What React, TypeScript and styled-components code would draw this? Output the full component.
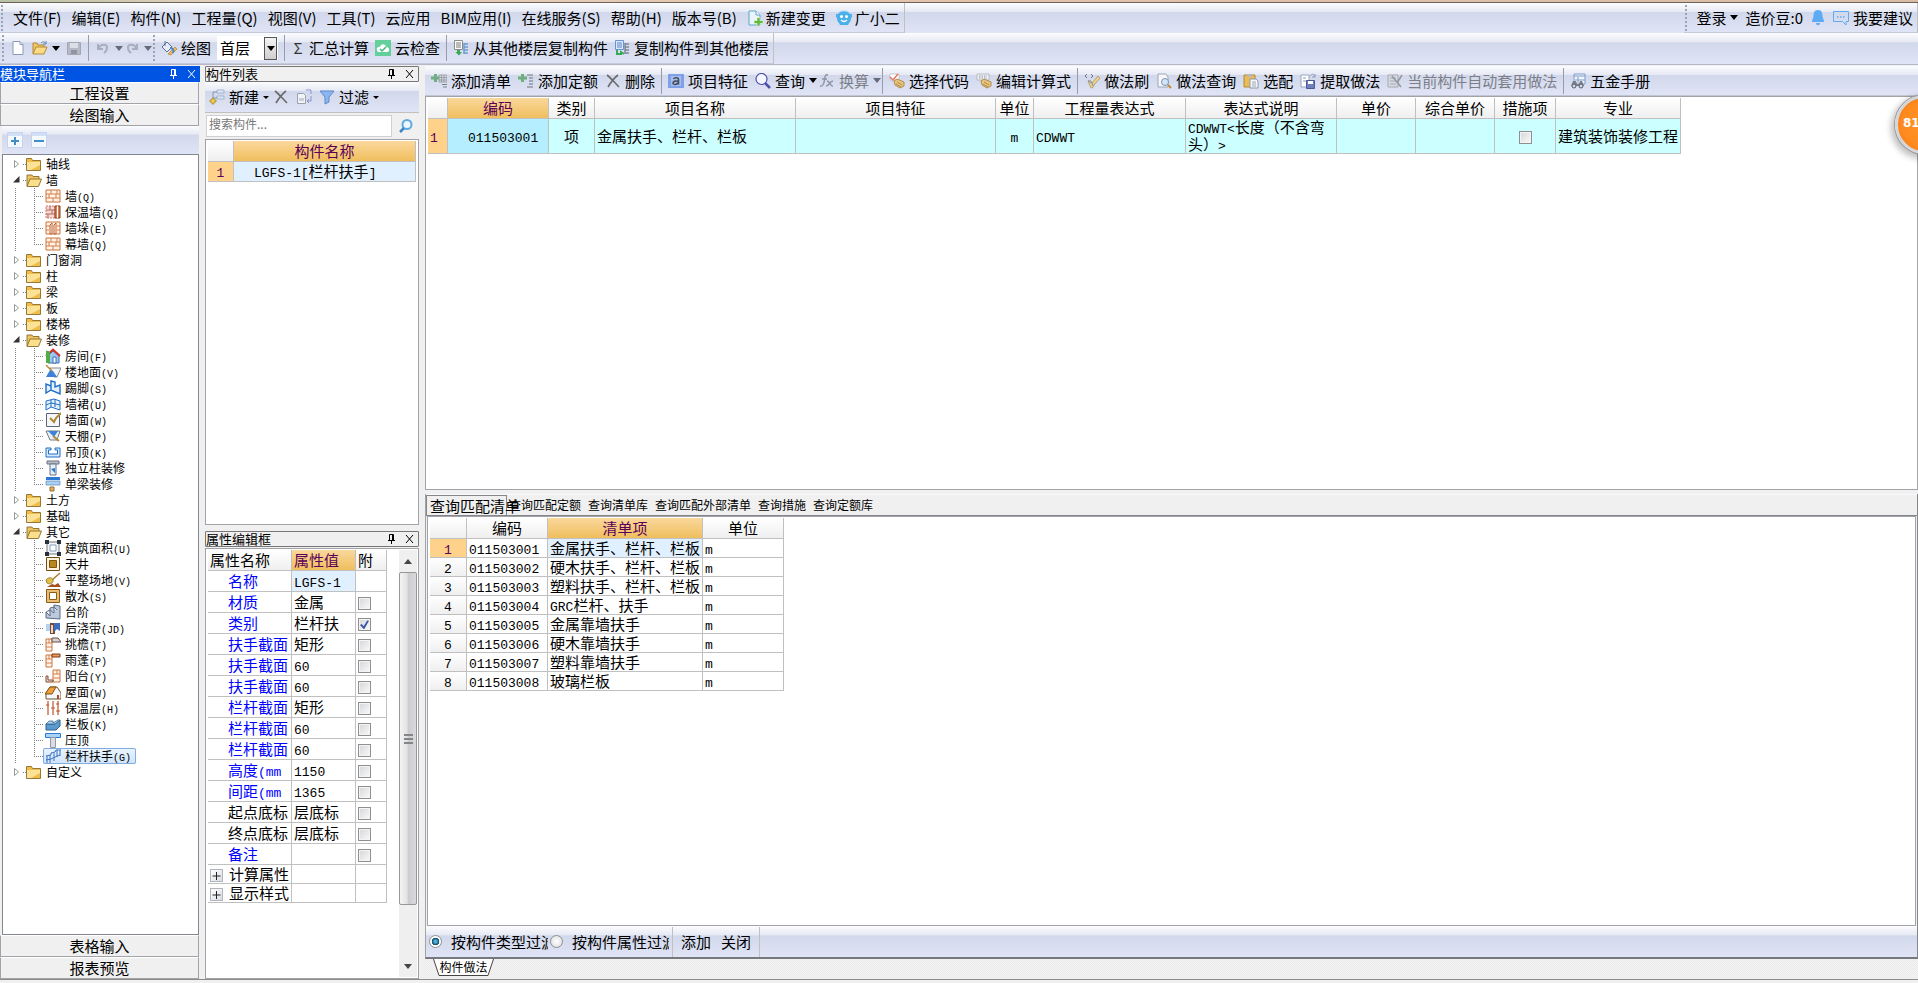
import React from 'react';
import styled, { createGlobalStyle, css } from 'styled-components';

const GlobalStyle = createGlobalStyle`
  *, *::before, *::after { box-sizing: border-box; }
  body { margin: 0; }
  button, input, select { font: inherit; color: inherit; margin: 0; }
  button { background: none; border: 0; padding: 0; white-space: nowrap; }
  ul { list-style: none; margin: 0; padding: 0; }
`;

const LINE = '#c0c0c0';
const EDGE = '#a2a3a8';
const barFill = 'linear-gradient(#fbfcfe 0, #e6e9f4 30%, #d2d8eb 31%, #dfe5f6 100%)';
const headFill = 'linear-gradient(#ffffff, #efefef)';
const activeHeadFill = 'linear-gradient(#fad89c, #f0be5e)';

/* ---------- icons ---------- */

const shapes: Record<string, React.ReactNode> = {
  newFile: <><path d="M3 1.500h7l3 3v10H3z" fill="#fff" stroke="#8a9bb8" /><path d="M10 1.500v3h3" fill="#dce6f4" stroke="#8a9bb8" /></>,
  open: <><path d="M1 14V3h4l1 2h6v3" fill="#f0c560" stroke="#b58a3a" /><path d="M1 14 4 7h11l-3 7z" fill="#fbdc84" stroke="#b58a3a" /><path d="M9 3c2-2 4-1 5 1m0-3v3h-3" fill="none" stroke="#5f86b8" /></>,
  save: <><path d="M1.500 2.500h13v12h-13z" fill="#b4b9c6" stroke="#a3a7b4" /><path d="M4 3h8v5H4z" fill="#dcdfe7" /><path d="M5 10h6v4H5z" fill="#8f95a4" /></>,
  undo: <path d="M3 4v5h5M3.500 8.500C6 3 13 4 12 8c0 3-2 4-3 5" fill="none" stroke="#a9aebd" strokeWidth="2" />,
  redo: <path d="M13 4v5H8M12.500 8.500C10 3 3 4 4 8c0 3 2 4 3 5" fill="none" stroke="#a9aebd" strokeWidth="2" />,
  draw: <><path d="M1 7 6 2l5 5-5 5z" fill="#e6edf8" stroke="#5c7193" /><path d="M4 1v5" stroke="#5c7193" /><path d="m7 14 7-7 2 2-6 6z" fill="#e9b95c" stroke="#a77a2a" strokeWidth=".6" /><path d="M9 8c3 0 4 2 3 5" fill="none" stroke="#4c83cc" strokeWidth="2" /></>,
  cloudCheck: <><rect width="16" height="16" fill="#63cf9a" /><path d="M3 12c-3-3 0-6 2-5 1-4 6-3 6 0 4 0 4 5 1 5z" fill="#fff" /><path d="m5 9 2 2 4-4" fill="none" stroke="#46b57c" strokeWidth="1.500" /></>,
  copyFrom: <><path d="M1.500.5h8v9h-8z" fill="#fff" stroke="#8b8b8b" /><path d="M3 3h5M3 5h5M3 7h5" stroke="#777" /><path d="M4 10h3v2h2l-3 3.500L2.500 12H4z" fill="#39a957" /><path d="M11 3v11M11 4h4M11 7h4M11 10h4M11 13h4" stroke="#6b9bd2" strokeWidth="1.500" fill="none" /></>,
  copyTo: <><path d="M1.500.5h8v9h-8z" fill="#dce8fa" stroke="#6b93cf" /><path d="M3 3h5M3 5h5M3 7h5" stroke="#5985c9" /><path d="M3 10v4h4v-2l3 2" stroke="#39a957" strokeWidth="2" fill="none" /><path d="M11 3v11M11 4h4M11 7h4M11 10h4M11 13h4" stroke="#7d8a9a" strokeWidth="1.500" fill="none" /></>,
  newChange: <><path d="M2 1h7l4 4v10H2z" fill="#eaf4fb" stroke="#5fa5c9" /><path d="M9 1v4h4" fill="#fff" stroke="#5fa5c9" /><path d="M10 7.500h3v3h3v3h-3V16h-3v-2.500H7v-3h3z" fill="#62bb3c" stroke="#fff" strokeWidth=".5" /></>,
  robot: <><path d="M2 4c2-4 10-4 12 0h2v3l-1 1c0 3-1 4-2 5l-1 2H4l-1-2C2 12 1 11 1 8L0 7V4z" fill="#4bb0ea" /><circle cx="5.500" cy="6.500" r="1.500" fill="#fff" /><circle cx="10.500" cy="6.500" r="1.500" fill="#fff" /><path d="M5 10c2 2 4 2 6 0" stroke="#fff" fill="none" strokeWidth="1.200" /><path d="M3 2.500c3-2 7-2 10 0" stroke="#9ad6f7" fill="none" /></>,
  bell: <><path d="M8 0c4 0 4.500 3 4.500 6.500L14 11v1H2v-1l1.500-4.500C3.500 3 4 0 8 0z" fill="#5dabf4" /><path d="M6 13h4c0 3-4 3-4 0z" fill="#5dabf4" /></>,
  chat: <><path d="M.5 1.500h15v10H13V15l-3.500-3.500h-9z" fill="none" stroke="#5dabf4" /><path d="M4 7h1.500M7 7h1.500M10 7h1.500" stroke="#5dabf4" strokeWidth="1.500" /></>,
  addList: <><path d="M3 1h3v2.500h3v3H6V9H3V6.500H0v-3h3z" fill="#6fae7e" /><path d="M8 2h8v7H8z" fill="#d8dbe2" stroke="#8f949e" strokeWidth=".8" /><path d="M8 4.500h8M8 7h8M10.500 2v7M13 2v7" stroke="#8f949e" strokeWidth=".8" /><path d="M11 11.500h5M12 14h4" stroke="#7a808b" /></>,
  addQuota: <><path d="M3 1h3v2.500h3v3H6V9H3V6.500H0v-3h3z" fill="#6fae7e" /><path d="M9 2h6M11 5h4M11 8h4M11 11h4M9 14h6" stroke="#6c727c" /></>,
  cross: <path d="M2 2c4 3 8 8 12 12M13 2C9 5 6 9 3 14" fill="none" stroke="#6b6b6b" strokeWidth="1.600" />,
  feature: <><rect y="1" width="16" height="14" fill="#7ea0e6" /><rect x="3" y="3" width="10" height="10" fill="#a7bdf0" /><path d="M5.500 6c1-2 5-1.500 5 .5v5m0-3c-2-1-5.500-.5-5.500 1.500s4 2 5.500-.5" fill="none" stroke="#4a4f5e" strokeWidth="1.600" /></>,
  magnifier: <><circle cx="6.500" cy="6" r="5.500" fill="#f3f6ff" stroke="#4d4fae" strokeWidth="1.200" /><path d="m10 10 5 5" stroke="#4d4fae" strokeWidth="2.500" /></>,
  fx: <path d="M9 2C6 1 6 4 5.500 7S4 14 1 13m2-7h5m0 2c3 0 3 6 6 5m0-5c-3 0-4 5-7 5" fill="none" stroke="#8e93a0" strokeWidth="1.400" />,
  pickCode: <><path d="M1 1h9v6H1z" fill="#fff" stroke="#b9b9b9" strokeWidth=".7" /><path d="m1 4 3 3 5-6" fill="none" stroke="#e2755e" strokeWidth="1.500" /><path d="m5 8 3-2 7 3v4l-4 2-5-3z" fill="#e7c57e" stroke="#a57c3a" strokeWidth=".8" /><path d="m8 9 5 3M7 11l5 3" stroke="#a57c3a" strokeWidth=".8" /></>,
  editExpr: <><path d="M1 1h12v6H1z" fill="#eef0f5" stroke="#a4a9b3" strokeWidth=".7" /><path d="M3 3h8M3 5h8" stroke="#8f949e" strokeDasharray="1.500 1" /><path d="m5 8 3-2 7 3v4l-4 2-5-3z" fill="#e7c57e" stroke="#a57c3a" strokeWidth=".8" /><path d="m8 9 5 3M7 11l5 3" stroke="#a57c3a" strokeWidth=".8" /></>,
  brush: <><path d="M3 1 1 3l2 2M7 1l2 2-2 2" fill="none" stroke="#6f7480" /><path d="m4 8 2-1 2 3 6-7 2 2-6 7c0 2-2 3-3 3z" fill="#edd28e" stroke="#a58a4a" strokeWidth=".7" /><path d="m4 8 4 2 1 3" stroke="#6f93c8" fill="none" /></>,
  docSearch: <><path d="M2 1h8l2 3v10H2z" fill="#f6f8fb" stroke="#9aa6b8" /><circle cx="9" cy="9" r="3.500" fill="#cfe6f8" stroke="#7d94b0" /><path d="m12 12 3 3" stroke="#c58a3c" strokeWidth="2" /></>,
  clipboard: <><path d="M1 2h11v12H1z" fill="#eabb59" stroke="#b08a39" /><path d="M4 1h5v3H4z" fill="#b9b9b9" /><path d="M7 6h6l2 2v7H7z" fill="#f5f7fb" stroke="#8d98ab" /><path d="M9 9h4M9 11h4M9 13h4" stroke="#9aa6b8" /></>,
  extract: <><path d="M1 2h8v12H1z" fill="#fff" stroke="#9aa6b8" /><path d="M3 5h3M3 8h3" stroke="#8a9bb8" /><path d="M6.500 7.500h8v8h-8z" fill="#6f7fbc" stroke="#4c5b96" /><path d="M8 8h5v3H8z" fill="#fff" /><path d="M10 3c2-3 4-2 5 1m0-3v3h-3" fill="none" stroke="#8a9bb8" /></>,
  autoApply: <><path d="M1 2h10v12H1z" fill="#d7dae1" stroke="#a3a7b1" /><path d="M3 5h6M3 8h6M3 11h6" stroke="#a3a7b1" /><path d="M5 3 14 14M10 10l5-8" stroke="#9297a3" strokeWidth="1.500" /></>,
  handbook: <><path d="M4 1h11v10H4z" fill="#eef4fc" stroke="#7f9cc8" /><path d="M4 3h11M8 4v6M5 7h10" stroke="#7f9cc8" /><path d="M3 8h3l1 3h2l1-3h2l2 5H1z" fill="#7a818d" /><circle cx="4" cy="13" r="2" fill="#d5dae4" stroke="#565d69" /><circle cx="11" cy="13" r="2" fill="#d5dae4" stroke="#565d69" /></>,
  newItem: <><path d="M4 13V3h4m-4 6h4" fill="none" stroke="#7e94b5" /><path d="M8 1h7v3H8zM8 7h7v3H8z" fill="#dfe7f3" stroke="#8aa0c0" strokeWidth=".7" /><path d="M3 9h2v2h2v2H5v2H3v-2H1v-2h2z" fill="#f5d451" stroke="#a98a20" strokeWidth=".8" /></>,
  copyItem: <><path d="M1.500 4.500h6l2 2v8h-8z" fill="#f2f3f6" stroke="#9aa0ad" /><path d="M3 9h5v3H3z" fill="#c9cdd6" /><path d="M10 1h5v4M15 7v5h-4m2-2-2 2 2 2" fill="none" stroke="#8795cf" /></>,
  funnel: <path d="M1 2h14L10 8v5l-4 2V8z" fill="#8cb6ef" stroke="#5d87cc" />,
  searchBlue: <><circle cx="9" cy="6.500" r="4.500" fill="#eef7ff" stroke="#5eaae0" strokeWidth="2" /><path d="m6 10-4 4" stroke="#3a86c8" strokeWidth="2.500" /></>,
  expand: <><path d="M.5.5h15v15H.5z" fill="#f5f8fd" stroke="#c4d3ee" /><path d="M1 1h14v3H1z" fill="#d3dff5" /><path d="M8 5v8M4 9h8" stroke="#3f8fc6" strokeWidth="2" /></>,
  collapse: <><path d="M.5.5h15v15H.5z" fill="#f5f8fd" stroke="#c4d3ee" /><path d="M1 1h14v3H1z" fill="#d3dff5" /><path d="M3 9h10" stroke="#3f8fc6" strokeWidth="2" /></>,
  folder: <><path d="M.5 14.500v-12h5l1 2h8v10z" fill="#f0bd49" stroke="#8a6d2b" strokeWidth=".9" /><path d="M1 6h13v3l-9 5H1z" fill="#fbe297" /></>,
  folderOpen: <><path d="M1 14V3h5l1 1.500h6V8" fill="#edc35d" stroke="#8a6d2b" strokeWidth=".9" /><path d="M1 14.500 4 7h11.500l-3 7.500z" fill="#fbdf8b" stroke="#8a6d2b" strokeWidth=".9" /></>,
  brick: <><path d="M1 2h14v12H1z" fill="#fff3e8" stroke="#c9743d" /><path d="M1 6h14M1 10h14M6 2v4M11 6v4M4 6v4M8 10v4M12 2v4" stroke="#d67f48" fill="none" /></>,
  brickIns: <><path d="M1 2h9v12H1z" fill="#f7d9d3" stroke="#c97b6d" strokeDasharray="2 1" /><path d="M1 6h9M1 10h9M5 2v4M7 6v4M3 10v4" stroke="#b86b62" /><path d="M10 2h5v12h-5z" fill="#d98555" stroke="#8c3d20" /><path d="M12.500 2v12" stroke="#fff" /></>,
  brickPier: <><path d="M1 2h14v12H1z" fill="#fff3e8" stroke="#c9743d" /><path d="M1 6h4M1 10h3M12 6h3M12 10h3" stroke="#d67f48" /><path d="M5 14V5l2-2v11zM9 14V5l2-2v11z" fill="#fff" stroke="#c05a24" /></>,
  room: <><path d="M3 8v7h11V8L8 3z" fill="#9cc6f0" stroke="#3a6fb0" /><path d="M1 8 8 1.500 15 8" fill="none" stroke="#d93025" strokeWidth="2" /><path d="M1 3c3-1 4 1 4 3v9H1z" fill="#4fae4a" /><path d="M8 9h3v6H8z" fill="#fff" stroke="#3a6fb0" /></>,
  floorFinish: <><path d="M5 4h11l-4 9H9z" fill="#f2f6fb" stroke="#888" /><path d="M5 6 1 13h11L8 7z" fill="#3d82d6" /><path d="m1 1 6 6" stroke="#b58a3a" strokeWidth="1.500" /></>,
  skirting: <path d="M1 4v9l5-3 9 4V5L10 7V2L6 1v5zM6 6v4" fill="#e3f0fd" stroke="#1f6fc4" strokeWidth="1.400" />,
  dado: <path d="M1 5v9l5-3 9 3V5L9 3 5 4zM1 9l5-2 9 2M6 4v7M10 3v8" fill="#e3f0fd" stroke="#1f6fc4" />,
  wallFinish: <><path d="M1.500 1.500h13v13h-13z" fill="#f4f6fb" stroke="#5c6577" /><path d="m5 6 4 4 2-4 5-5" fill="none" stroke="#b08a2f" strokeWidth="2" /></>,
  ceiling: <><path d="M1 3h14l-3 9H5z" fill="#e3f0fd" stroke="#777" /><path d="M3 3h10l-4 6z" fill="#3d82d6" /><path d="m8 8 6 5" stroke="#b58a3a" strokeWidth="2" /></>,
  dropCeiling: <path d="M1 4h5v2H3.500v4h9V6H10V4h5v9H1z" fill="#d4e9fb" stroke="#1f6fc4" />,
  columnFinish: <><path d="M2 1h12v3H2z" fill="#b8bec9" stroke="#6d7480" /><path d="M5 4h6v11H5z" fill="#e3f0fd" stroke="#6d7480" /><path d="m6 9 4 4V8z" fill="#2c7ad6" /></>,
  beamFinish: <><path d="M1 1h14v3H1z" fill="#2c7ad6" /><path d="M1 5h14v4H1z" fill="#a9d0f2" stroke="#5688ba" strokeWidth=".7" /><path d="M5 11h4v4H5z" fill="#e5b06c" stroke="#9b6c2c" /></>,
  area: <><path d="M2 2h12v12H2z" fill="#f0f4fb" stroke="#777" /><path d="M5 5h6v6H5z" fill="#fff" stroke="#8aa0c0" /><path d="M0 0h4v4H0zM12 0h4v4h-4zM0 12h4v4H0zM12 12h4v4h-4z" fill="#2a2f3d" /></>,
  well: <><path d="M1.500 1.500h13v13h-13z" fill="#fdf3dc" stroke="#6e4c14" /><path d="M4.500 4.500h7v7h-7z" fill="#b9851f" stroke="#7d5510" /></>,
  site: <><path d="m15 1-8 7" stroke="#a27e2e" strokeWidth="1.500" /><path d="M1 8c2-3 6-3 7 0s-3 5-6 3z" fill="#e2c04a" stroke="#8c7220" strokeWidth=".8" /><path d="m2 15 5-3 3 1 3-2 3 4z" fill="#a4511d" /></>,
  apron: <><path d="M1.500 1.500h13v13h-13z" fill="#e9bd72" stroke="#8a5b1a" /><path d="M4.500 4.500h7v7h-7z" fill="#fff" stroke="#8a5b1a" /></>,
  steps: <><path d="M1 14V8l4-2V4l4-1V1l6 1v13z" fill="#bcc9dd" stroke="#5d6b83" /><path d="m1 8 4 4V6l4 3V3l3 3" fill="#eef3fa" stroke="#5d6b83" /></>,
  strip: <><path d="M1 4h5v7H1z" fill="#b4d2f0" /><path d="M5 3h5v11H5z" fill="#7a4a33" /><path d="M9 3h6v8l-3-2-3 3z" fill="#3d6fc0" /><path d="M6 5h2v8H6z" fill="#e9d6cc" /></>,
  eave: <><path d="M1 3h6v12H1z" fill="#fff3e8" stroke="#c9743d" /><path d="M1 7h6M1 11h6M4 3v4" stroke="#d67f48" /><path d="M7 2h6l3 4H7z" fill="#cfd4dc" stroke="#6e4c3c" /></>,
  canopy: <><path d="M1 3h6v12H1z" fill="#fff3e8" stroke="#c9743d" /><path d="M1 7h6M1 11h6M4 3v4" stroke="#d67f48" /><path d="M7 2h8v3H7z" fill="#e39a5c" stroke="#7e3d18" /></>,
  balcony: <><path d="M8 2h7v12H8z" fill="#fff3e8" stroke="#c9743d" /><path d="M8 6h7M8 10h7M12 2v4" stroke="#d67f48" /><path d="M1 8h2v4h5v2H1z" fill="#d9dce3" stroke="#8c4f2c" /></>,
  roof: <><path d="M1 9 5 3h7l4 6v6H1z" fill="#f5f7fb" stroke="#6b5531" /><path d="M0 10 5 3h6L7 10z" fill="#eea03b" stroke="#805213" /><path d="M12 11h2v4h-2z" fill="#b24a1f" /></>,
  insulation: <path d="M3 1v14M8 1v14M13 1v14M1 5h3M6 8h4M11 11h4M11 4h3" stroke="#c0532a" strokeWidth="1.200" />,
  railPlate: <><path d="M1 8h9l5-4v6l-4 4H1z" fill="#5b9bd0" stroke="#2f608c" /><path d="m1 8 3-3h4v2l5-3h2l-5 4z" fill="#a9d0ee" stroke="#2f608c" strokeWidth=".7" /></>,
  coping: <><path d="M.5 1.500h15v4H.5z" fill="#a9d3f5" stroke="#2c7ad6" /><path d="M5.500 5.500h5v10h-5z" fill="#d9dce3" stroke="#9298a5" /></>,
  handrail: <path d="M1 8l5-1V5l4-1 1-2h5M2 8v7M5 7v8M9 5v8M12 2v7M15 2v6M1 12l5-1 4-2 5-2" fill="none" stroke="#3a72c4" />,
};

const Glyph = styled.svg`
  width: 16px;
  height: 16px;
  flex: none;
  display: block;
`;

const Icon = ({ name }: { name: string }) => (
  <Glyph viewBox="0 0 16 16" aria-hidden="true">{shapes[name]}</Glyph>
);

const CaretGlyph = styled.svg<{ $pull?: boolean }>`
  width: 8px;
  height: 5px;
  flex: none;
  margin-right: ${p => (p.$pull ? '-5px' : '0')};
`;

const Caret = ({ pull, color = '#000' }: { pull?: boolean; color?: string }) => (
  <CaretGlyph $pull={pull} viewBox="0 0 8 5" aria-hidden="true"><path d="M0 0h8L4 5z" fill={color} /></CaretGlyph>
);

const SmallCaret = () => (
  <CaretGlyph $pull viewBox="0 0 8 5" aria-hidden="true"><path d="M0 1h6L3 4z" fill="#000" /></CaretGlyph>
);

/* ---------- text in the grid face ---------- */

const Latin = styled.span<{ $small?: boolean }>`
  font-family: "Liberation Mono", "Noto Sans CJK SC", monospace;
  font-size: ${p => (p.$small ? '10px' : '13px')};
  line-height: 1;
`;

const GridText = ({ text, small }: { text: string; small?: boolean }) => (
  <>
    {text.split(/([\x20-\x7e]+)/).filter(Boolean).map((part, i) =>
      /^[\x20-\x7e]/.test(part) ? <Latin key={i} $small={small}>{part}</Latin> : part)}
  </>
);

/* ---------- window frame ---------- */

const Window = styled.div`
  height: 100vh;
  min-height: 900px;
  display: flex;
  flex-direction: column;
  position: relative;
  overflow: hidden;
  background: #f0f0f0;
  color: #000;
  font: 15px/18px "Noto Sans CJK SC", sans-serif;
`;

const TitleEdge = styled.div`
  height: 3px;
  flex: none;
  background: linear-gradient(90deg, #b9c2a4, #e6d2c0 12%, #e2c3aa 50%, #d9bda6);
  border-bottom: 1px solid #6d625c;
`;

const Strip = styled.div<{ $height: number }>`
  height: ${p => p.$height}px;
  flex: none;
  display: flex;
  justify-content: space-between;
  background: ${barFill};
`;

const BarPart = styled.div<{ $gap?: number; $start?: number }>`
  display: flex;
  align-items: center;
  gap: ${p => p.$gap ?? 10}px;
  padding: 0 4px 0 ${p => p.$start ?? 0}px;
  border-right: 1px solid ${LINE};
  border-bottom: 1px solid #c5cad8;
`;

const Grip = styled.span<{ $space?: number }>`
  width: 2px;
  height: 26px;
  flex: none;
  margin-right: ${p => p.$space ?? 0}px;
  background: repeating-linear-gradient(#9aa2b8 0 2px, transparent 2px 4px);
`;

const BarButton = styled.button<{ $muted?: boolean; $tight?: boolean }>`
  display: flex;
  align-items: center;
  gap: ${p => (p.$tight ? 3 : 4)}px;
  height: 24px;
  color: ${p => (p.$muted ? '#7d7f88' : '#000')};
`;

const Divider = styled.span<{ $snug?: boolean }>`
  width: 1px;
  height: 26px;
  flex: none;
  margin: 0 ${p => (p.$snug ? '-1px' : '0')};
  background: #999ca8;
`;

const FloorBox = styled.span`
  display: flex;
  align-items: center;
  width: 61px;
  height: 24px;
  padding-right: 1px;
  background: #fff;
`;

const FloorSelect = styled.select`
  appearance: none;
  flex: 1;
  min-width: 0;
  border: 0;
  background: transparent;
  padding: 0 0 0 3px;
`;

const FloorArrow = styled.span`
  display: grid;
  place-items: center;
  width: 13px;
  height: 23px;
  border: 1px solid #55555a;
  background: linear-gradient(#f4f4f4, #cfcfcf);
`;

const Sigma = styled.span`
  width: 14px;
  font-size: 15px;
  color: #333;
`;

/* ---------- docks ---------- */

const Body = styled.div`
  flex: 1;
  min-height: 0;
  display: flex;
  padding: 1px 0 0;
  border-top: 1px solid #b4b8c8;
`;

const NavDock = styled.aside`
  width: 200px;
  flex: none;
  display: flex;
  flex-direction: column;
`;

const MidDock = styled.aside`
  width: 214px;
  flex: none;
  margin-left: 5px;
  display: flex;
  flex-direction: column;
`;

const DockTitle = styled.header<{ $active?: boolean }>`
  height: 16px;
  flex: none;
  display: flex;
  align-items: center;
  font-size: 13px;
  line-height: 14px;
  ${p => p.$active
    ? css`background: #0054e3; color: #fff;`
    : css`border: 1px solid #777; border-radius: 1px;`}
`;

const DockName = styled.span`
  flex: 1;
`;

const DockButton = styled.button`
  width: 18px;
  display: grid;
  place-items: center;
`;

const DockSvg = styled.svg`
  width: 9px;
  height: 10px;
`;

const DockHeader = ({ title, active }: { title: string; active?: boolean }) => (
  <DockTitle $active={active}>
    <DockName>{title}</DockName>
    <DockButton aria-label="固定">
      <DockSvg viewBox="0 0 9 10"><path d="M2.500 6V.5h4V6M5.500 1v5M1 6.500h7M4.500 7v3" fill="none" stroke="currentColor" /></DockSvg>
    </DockButton>
    <DockButton aria-label="关闭">
      <DockSvg viewBox="0 0 9 10"><path d="m1 1 7 8M8 1 1 9" fill="none" stroke="currentColor" /></DockSvg>
    </DockButton>
  </DockTitle>
);

const NavTab = styled.button`
  height: 22px;
  flex: none;
  margin-right: 1px;
  border: 1px solid ${EDGE};
  border-top-color: #fff;
  background: #f0f0f0;
`;

const NavTools = styled.div`
  height: 28px;
  flex: none;
  display: flex;
  align-items: center;
  gap: 8px;
  margin: 0 1px 0 2px;
  padding-left: 5px;
  background: ${barFill};
`;

const TreeBox = styled.nav`
  flex: 1;
  min-height: 0;
  overflow: hidden;
  margin: 0 1px 0 2px;
  padding-top: 1px;
  border: 1px solid #828790;
  background: #fff;
  font-size: 12px;
  line-height: 16px;
`;

const dots = (dir: string) => `repeating-linear-gradient(${dir}, #808080 0 1px, transparent 1px 2px)`;

const TreeRow = styled.div<{ $child?: boolean }>`
  display: flex;
  align-items: center;
  height: 16px;
  padding-left: ${p => (p.$child ? 12 : 10)}px;
`;

const Twisty = styled.svg`
  width: 8px;
  height: 8px;
  margin-right: 2px;
`;

const Stub = styled.span`
  width: 3px;
  height: 1px;
  background: ${dots('to right')};
`;

const Trunk = styled.span`
  width: 1px;
  height: 16px;
  margin-right: 18px;
  background: ${dots('to bottom')};
`;

const Branch = styled.span<{ $last: boolean }>`
  width: 9px;
  height: 16px;
  background:
    ${dots('to bottom')} 0 0 / 1px ${p => (p.$last ? '9px' : '16px')} no-repeat,
    ${dots('to right')} 0 8px / 9px 1px no-repeat;
`;

const NodeButton = styled.button<{ $child?: boolean; $selected?: boolean }>`
  display: flex;
  align-items: center;
  gap: 4px;
  height: 16px;
  padding: 0 5px 0 ${p => (p.$child ? 2 : 0)}px;
  ${p => p.$selected && css`
    border-radius: 2px;
    background: linear-gradient(#eaf4fe, #cfe4fc);
    box-shadow: inset 0 0 0 1px #84acdd;
  `}
`;

const ToolRow = styled.div`
  height: 31px;
  flex: none;
  display: flex;
  align-items: center;
  gap: 7px;
  padding-left: 4px;
  background: ${barFill};
  border-bottom: 1px solid ${LINE};
`;

const SearchRow = styled.div`
  height: 25px;
  flex: none;
  display: flex;
  align-items: center;
  gap: 6px;
  padding: 1px 5px 1px 1px;
`;

const SearchInput = styled.input`
  flex: 1;
  min-width: 0;
  height: 22px;
  padding: 0 2px 4px;
  border: 1px solid #d0d0d4;
  background: #fff;
  font-size: 12px;
  &::placeholder { color: #777; opacity: 1; }
`;

const Well = styled.div<{ $grow: number }>`
  flex: ${p => p.$grow} 1 0;
  min-height: 0;
  overflow: hidden;
  display: flex;
  align-items: flex-start;
  justify-content: space-between;
  padding: 1px 1px 1px 2px;
  border: 1px solid ${EDGE};
  background: #fff;
`;

const DockGap = styled.div<{ $size: number }>`
  height: ${p => p.$size}px;
  flex: none;
`;

/* ---------- data tables ---------- */

const Grid = styled.table`
  table-layout: fixed;
  width: min-content;
  border-collapse: separate;
  border-spacing: 0;
  flex: none;
  line-height: 16px;
`;

const Col = styled.col<{ $w: number }>`
  width: ${p => p.$w}px;
`;

const cell = css`
  padding: 0 2px;
  border-right: 1px solid ${LINE};
  border-bottom: 1px solid ${LINE};
  font-weight: 400;
  overflow: hidden;
  white-space: nowrap;
`;

const Head = styled.th<{ $active?: boolean; $left?: boolean }>`
  ${cell}
  height: 21px;
  text-align: ${p => (p.$left ? 'left' : 'center')};
  background: ${p => (p.$active ? activeHeadFill : headFill)};
  color: ${p => (p.$active ? '#5a0058' : '#000')};
`;

const RowHead = styled.th<{ $active?: boolean; $left?: boolean }>`
  ${cell}
  text-align: ${p => (p.$left ? 'left' : 'center')};
  background: ${p => (p.$active ? '#ffd28c' : headFill)};
  color: ${p => (p.$active ? '#5a0058' : '#000')};
`;

const Cell = styled.td<{ $h: number; $fill?: string; $align?: string; $pad?: number; $blue?: boolean; $wrap?: boolean }>`
  ${cell}
  height: ${p => p.$h}px;
  padding-left: ${p => p.$pad ?? 2}px;
  text-align: ${p => p.$align ?? 'left'};
  background: ${p => p.$fill ?? '#fff'};
  color: ${p => (p.$blue ? '#0000ff' : '#000')};
  white-space: ${p => (p.$wrap ? 'normal' : 'nowrap')};
`;

const Check = styled.input`
  appearance: none;
  display: inline-grid;
  place-items: center;
  width: 13px;
  height: 13px;
  vertical-align: middle;
  border: 1px solid #8e8f8f;
  background: linear-gradient(135deg, #d4d6da, #fafafa);
  box-shadow: inset 0 0 0 1px #f4f4f4;
  &:checked::before {
    content: '';
    width: 9px;
    height: 9px;
    background: #3a57a5;
    clip-path: polygon(0 50%, 20% 40%, 40% 65%, 80% 0, 100% 5%, 45% 100%);
  }
`;

const PlusBox = styled.button`
  display: inline-grid;
  place-items: center;
  width: 13px;
  height: 13px;
  margin-right: 6px;
  vertical-align: middle;
  border: 1px solid #b0b4bc;
  background: linear-gradient(135deg, #fff, #d9dde4);
`;

const ScrollTrack = styled.div`
  width: 18px;
  height: 100%;
  display: flex;
  flex-direction: column;
  background: #efefef;
`;

const ScrollEnd = styled.button`
  height: 22px;
  display: grid;
  place-items: center;
`;

const ScrollThumb = styled.div`
  flex: 334 1 0;
  display: grid;
  place-content: center;
  gap: 2px;
  border: 1px solid #979797;
  border-radius: 2px;
  background: linear-gradient(90deg, #f4f4f4, #e2e2e4 45%, #cbccd0 50%, #dadadc);
`;

const ThumbLine = styled.span`
  width: 9px;
  height: 2px;
  background: #85868a;
`;

const ScrollRest = styled.div`
  flex: 50 1 0;
`;

/* ---------- work area ---------- */

const Work = styled.main`
  flex: 1;
  min-width: 0;
  margin-left: 6px;
  display: flex;
  flex-direction: column;
`;

const WorkTools = styled.div`
  height: 30px;
  flex: none;
  display: flex;
  align-items: center;
  gap: 7px;
  padding-left: 6px;
  overflow: hidden;
  background: ${barFill};
  border-bottom: 1px solid #c2c5d2;
`;

const TabRow = styled.div`
  height: 22px;
  flex: none;
  display: flex;
  align-items: center;
  gap: 7px;
  border-top: 1px solid #fafafa;
  border-bottom: 1px solid #85868a;
`;

const QueryTab = styled.button<{ $active?: boolean }>`
  font-size: 12px;
  line-height: 18px;
  ${p => p.$active && css`
    align-self: flex-end;
    width: 81px;
    height: 20px;
    margin-right: -5px;
    padding-left: 3px;
    text-align: left;
    font-size: 15px;
    border: 1px solid #85868a;
    border-bottom: 0;
  `}
`;

const LowerFrame = styled.section`
  flex: 466 1 0;
  min-height: 0;
  display: flex;
  flex-direction: column;
  border-left: 1px solid ${EDGE};
  border-right: 1px solid #85868a;
  border-bottom: 2px solid #77787c;
`;

const LowerWell = styled(Well)`
  margin: 0 1px;
`;

const FilterBar = styled.div`
  height: 31px;
  flex: none;
  display: flex;
  align-items: center;
  background: ${barFill};
`;

const FilterPart = styled.div<{ $gap: number; $pad: number }>`
  height: 30px;
  display: flex;
  align-items: center;
  gap: ${p => p.$gap}px;
  padding: 0 ${p => p.$pad}px;
  border-right: 1px solid ${LINE};
`;

const RadioLabel = styled.label`
  display: flex;
  align-items: center;
  gap: 9px;
  width: 119px;
  overflow: hidden;
  white-space: nowrap;
`;

const Radio = styled.input`
  appearance: none;
  flex: none;
  width: 13px;
  height: 13px;
  border: 1px solid #8e8f8f;
  border-radius: 50%;
  background: radial-gradient(#fff, #d8dade);
  &:checked {
    background: radial-gradient(#4ab4e0 0 15%, #12435f 45%, #fff 52%);
  }
`;

const SheetTabs = styled.footer`
  height: 20px;
  flex: none;
  padding-left: 8px;
  background: repeating-conic-gradient(#f4f4f4 0 25%, #ebebeb 0 50%) 0 0 / 2px 2px;
`;

const SheetTab = styled.button`
  display: grid;
  width: 61px;
  height: 17px;
  padding: 0;
  font-size: 12px;
  line-height: 15px;
  > * { grid-area: 1 / 1; }
`;

const SheetShape = styled.svg`
  width: 61px;
  height: 17px;
`;

const Foot = styled.div`
  height: 4px;
  flex: none;
  border-top: 1px solid #8c8c8c;
  background: #f0f0f0;
`;

const Badge = styled.div`
  position: absolute;
  top: 95px;
  right: -36px;
  width: 59px;
  height: 59px;
  padding-left: 5px;
  border: 3px solid #d6d6d8;
  border-radius: 50%;
  background: radial-gradient(#ff9526, #ff8a1e 60%, #e07010);
  box-shadow: 0 0 0 1px #9a9a9e, -2px 3px 6px 2px rgba(0, 0, 0, .25);
  color: #fff;
  font: bold 12px/51px "DejaVu Sans", sans-serif;
`;

/* ---------- data ---------- */

const menus = ['文件(F)', '编辑(E)', '构件(N)', '工程量(Q)', '视图(V)', '工具(T)', '云应用', 'BIM应用(I)', '在线服务(S)', '帮助(H)', '版本号(B)'];

type TreeGroup = { name: string; items?: [string, string][] };

const tree: TreeGroup[] = [
  { name: '轴线' },
  { name: '墙', items: [['brick', '墙(Q)'], ['brickIns', '保温墙(Q)'], ['brickPier', '墙垛(E)'], ['brick', '幕墙(Q)']] },
  { name: '门窗洞' }, { name: '柱' }, { name: '梁' }, { name: '板' }, { name: '楼梯' },
  {
    name: '装修',
    items: [['room', '房间(F)'], ['floorFinish', '楼地面(V)'], ['skirting', '踢脚(S)'], ['dado', '墙裙(U)'], ['wallFinish', '墙面(W)'],
      ['ceiling', '天棚(P)'], ['dropCeiling', '吊顶(K)'], ['columnFinish', '独立柱装修'], ['beamFinish', '单梁装修']],
  },
  { name: '土方' }, { name: '基础' },
  {
    name: '其它',
    items: [['area', '建筑面积(U)'], ['well', '天井'], ['site', '平整场地(V)'], ['apron', '散水(S)'], ['steps', '台阶'], ['strip', '后浇带(JD)'],
      ['eave', '挑檐(T)'], ['canopy', '雨蓬(P)'], ['balcony', '阳台(Y)'], ['roof', '屋面(W)'], ['insulation', '保温层(H)'],
      ['railPlate', '栏板(K)'], ['coping', '压顶'], ['handrail', '栏杆扶手(G)']],
  },
  { name: '自定义' },
];

type Tool = { icon: string; text: string; drop?: boolean; muted?: boolean } | null;

const workTools: Tool[] = [
  { icon: 'addList', text: '添加清单' }, { icon: 'addQuota', text: '添加定额' }, { icon: 'cross', text: '删除' }, null,
  { icon: 'feature', text: '项目特征' }, { icon: 'magnifier', text: '查询', drop: true }, { icon: 'fx', text: '换算', drop: true, muted: true }, null,
  { icon: 'pickCode', text: '选择代码' }, { icon: 'editExpr', text: '编辑计算式' }, null,
  { icon: 'brush', text: '做法刷' }, { icon: 'docSearch', text: '做法查询' }, { icon: 'clipboard', text: '选配' },
  { icon: 'extract', text: '提取做法' }, { icon: 'autoApply', text: '当前构件自动套用做法', muted: true }, null,
  { icon: 'handbook', text: '五金手册' },
];

const properties: [string, string, 'blue' | 'black', boolean | null][] = [
  ['名称', 'LGFS-1', 'blue', null], ['材质', '金属', 'blue', false], ['类别', '栏杆扶', 'blue', true],
  ['扶手截面', '矩形', 'blue', false], ['扶手截面', '60', 'blue', false], ['扶手截面', '60', 'blue', false],
  ['栏杆截面', '矩形', 'blue', false], ['栏杆截面', '60', 'blue', false], ['栏杆截面', '60', 'blue', false],
  ['高度(mm', '1150', 'blue', false], ['间距(mm', '1365', 'blue', false],
  ['起点底标', '层底标', 'black', false], ['终点底标', '层底标', 'black', false], ['备注', '', 'blue', false],
];

const workCols: [string, number][] = [['', 20], ['编码', 101], ['类别', 46], ['项目名称', 201], ['项目特征', 200], ['单位', 38],
  ['工程量表达式', 152], ['表达式说明', 151], ['单价', 79], ['综合单价', 79], ['措施项', 61], ['专业', 125]];

const matches = ['金属扶手、栏杆、栏板', '硬木扶手、栏杆、栏板', '塑料扶手、栏杆、栏板', 'GRC栏杆、扶手', '金属靠墙扶手', '硬木靠墙扶手', '塑料靠墙扶手', '玻璃栏板'];

const CYAN = '#ccffff';

/* ---------- parts ---------- */

const MenuBar = () => (
  <Strip $height={30}>
    <BarPart $start={1}>
      <Grip />
      {menus.map(m => <BarButton key={m}>{m}</BarButton>)}
      <BarButton $tight><Icon name="newChange" />新建变更</BarButton>
      <BarButton $tight><Icon name="robot" />广小二</BarButton>
    </BarPart>
    <BarPart $gap={7} $start={1}>
      <Grip $space={2} />
      <BarButton>登录<Caret /></BarButton>
      <BarButton>造价豆:0</BarButton>
      <BarButton aria-label="消息"><Icon name="bell" /></BarButton>
      <BarButton><Icon name="chat" />我要建议</BarButton>
    </BarPart>
  </Strip>
);

const MainTools = () => (
  <Strip $height={31}>
    <BarPart $gap={6} $start={2}>
      <Grip />
      <BarButton aria-label="新建"><Icon name="newFile" /></BarButton>
      <BarButton aria-label="打开"><Icon name="open" /><Caret /></BarButton>
      <BarButton aria-label="保存"><Icon name="save" /></BarButton>
      <Divider />
      <BarButton aria-label="撤销"><Icon name="undo" /><Caret pull color="#666a76" /></BarButton>
      <BarButton aria-label="恢复"><Icon name="redo" /><Caret pull color="#666a76" /></BarButton>
      <Grip />
      <BarButton><Icon name="draw" />绘图</BarButton>
      <FloorBox>
        <FloorSelect aria-label="楼层" defaultValue="首层"><option>首层</option></FloorSelect>
        <FloorArrow><Caret /></FloorArrow>
      </FloorBox>
      <Divider />
      <BarButton><Sigma>Σ</Sigma>汇总计算</BarButton>
      <BarButton><Icon name="cloudCheck" />云检查</BarButton>
      <Divider />
      <BarButton><Icon name="copyFrom" />从其他楼层复制构件</BarButton>
      <BarButton><Icon name="copyTo" />复制构件到其他楼层</BarButton>
    </BarPart>
  </Strip>
);

const Navigator = () => (
  <NavDock>
    <DockHeader title="模块导航栏" active />
    <NavTab>工程设置</NavTab>
    <NavTab>绘图输入</NavTab>
    <NavTools>
      <BarButton aria-label="展开"><Icon name="expand" /></BarButton>
      <BarButton aria-label="折叠"><Icon name="collapse" /></BarButton>
    </NavTools>
    <TreeBox aria-label="构件树">
      <ul>
        {tree.map(group => (
          <li key={group.name}>
            <TreeRow>
              <Twisty viewBox="0 0 8 8" aria-hidden="true">
                {group.items
                  ? <path d="M6.500 0v6.500H0z" fill="#333" />
                  : <path d="M1.500.5 5.500 4 1.500 7.500z" fill="#fff" stroke="#999" />}
              </Twisty>
              <Stub />
              <NodeButton><Icon name={group.items ? 'folderOpen' : 'folder'} />{group.name}</NodeButton>
            </TreeRow>
            {group.items && (
              <ul>
                {group.items.map(([icon, label], i) => (
                  <li key={label}>
                    <TreeRow $child>
                      <Trunk />
                      <Branch $last={i === group.items!.length - 1} />
                      <NodeButton $child $selected={icon === 'handrail'}>
                        <Icon name={icon} /><span><GridText text={label} small /></span>
                      </NodeButton>
                    </TreeRow>
                  </li>
                ))}
              </ul>
            )}
          </li>
        ))}
      </ul>
    </TreeBox>
    <NavTab>表格输入</NavTab>
    <NavTab>报表预览</NavTab>
  </NavDock>
);

const ComponentDock = () => (
  <MidDock>
    <DockHeader title="构件列表" />
    <ToolRow>
      <BarButton><Icon name="newItem" />新建<SmallCaret /></BarButton>
      <BarButton aria-label="删除"><Icon name="cross" /></BarButton>
      <BarButton aria-label="复制"><Icon name="copyItem" /></BarButton>
      <BarButton><Icon name="funnel" />过滤<SmallCaret /></BarButton>
    </ToolRow>
    <SearchRow>
      <SearchInput aria-label="搜索构件" placeholder="搜索构件..." />
      <BarButton aria-label="搜索"><Icon name="searchBlue" /></BarButton>
    </SearchRow>
    <DockGap $size={1} />
    <Well $grow={386}>
      <Grid>
        <colgroup><Col $w={26} /><Col $w={182} /></colgroup>
        <thead><tr><Head /><Head $active>构件名称</Head></tr></thead>
        <tbody>
          <tr><RowHead $active><Latin>1</Latin></RowHead><Cell $h={20} $fill="#e0f0ff" $pad={20}><GridText text="LGFS-1[栏杆扶手]" /></Cell></tr>
        </tbody>
      </Grid>
    </Well>
    <DockGap $size={6} />
    <DockHeader title="属性编辑框" />
    <DockGap $size={1} />
    <Well $grow={431}>
      <Grid>
        <colgroup><Col $w={84} /><Col $w={64} /><Col $w={31} /></colgroup>
        <thead><tr><Head $left>属性名称</Head><Head $left $active>属性值</Head><Head $left>附</Head></tr></thead>
        <tbody>
          {properties.map(([name, value, tone, checked], i) => (
            <tr key={i}>
              <Cell $h={21} $pad={20} $blue={tone === 'blue'}><GridText text={name} /></Cell>
              <Cell $h={21} $fill={i === 0 ? '#e0f0ff' : undefined}><GridText text={value} /></Cell>
              <Cell $h={21}>{checked !== null && <Check type="checkbox" aria-label={`${name}附加`} defaultChecked={checked} />}</Cell>
            </tr>
          ))}
          {['计算属性', '显示样式'].map(name => (
            <tr key={name}>
              <Cell $h={19}>
                <PlusBox aria-label={`展开${name}`}><DockSvg viewBox="0 0 9 10"><path d="M4.500 1v8M.5 5h8" stroke="#222" /></DockSvg></PlusBox>
                {name}
              </Cell>
              <Cell $h={19} /><Cell $h={19} />
            </tr>
          ))}
        </tbody>
      </Grid>
      <ScrollTrack>
        <ScrollEnd aria-label="向上"><CaretGlyph viewBox="0 0 8 5"><path d="M0 5h8L4 0z" fill="#444" /></CaretGlyph></ScrollEnd>
        <ScrollThumb><ThumbLine /><ThumbLine /><ThumbLine /></ScrollThumb>
        <ScrollRest />
        <ScrollEnd aria-label="向下"><Caret color="#444" /></ScrollEnd>
      </ScrollTrack>
    </Well>
  </MidDock>
);

const WorkArea = () => (
  <Work>
    <WorkTools>
      {workTools.map((tool, i) => tool === null
        ? <Divider key={i} $snug />
        : (
          <BarButton key={i} $muted={tool.muted}>
            <Icon name={tool.icon} />{tool.text}
            {tool.drop && <Caret pull color={tool.muted ? '#666a76' : '#000'} />}
          </BarButton>
        ))}
    </WorkTools>
    <Well $grow={393}>
      <Grid>
        <colgroup>{workCols.map(([name, w]) => <Col key={name} $w={w} />)}</colgroup>
        <thead><tr>{workCols.map(([name]) => <Head key={name} $active={name === '编码'}>{name}</Head>)}</tr></thead>
        <tbody>
          <tr>
            <RowHead $active $left><Latin>1</Latin></RowHead>
            <Cell $h={35} $fill="#b4eeff" $pad={20}><Latin>011503001</Latin></Cell>
            <Cell $h={35} $fill={CYAN} $align="center">项</Cell>
            <Cell $h={35} $fill={CYAN}>金属扶手、栏杆、栏板</Cell>
            <Cell $h={35} $fill={CYAN} />
            <Cell $h={35} $fill={CYAN} $align="center"><Latin>m</Latin></Cell>
            <Cell $h={35} $fill={CYAN}><Latin>CDWWT</Latin></Cell>
            <Cell $h={35} $fill={CYAN} $wrap><GridText text="CDWWT<长度（不含弯头）>" /></Cell>
            <Cell $h={35} $fill={CYAN} />
            <Cell $h={35} $fill={CYAN} />
            <Cell $h={35} $fill={CYAN} $align="center"><Check type="checkbox" aria-label="措施项" /></Cell>
            <Cell $h={35} $fill={CYAN}>建筑装饰装修工程</Cell>
          </tr>
        </tbody>
      </Grid>
    </Well>
    <DockGap $size={4} />
    <LowerFrame>
      <TabRow>
        <QueryTab $active>查询匹配清单</QueryTab>
        {['查询匹配定额', '查询清单库', '查询匹配外部清单', '查询措施', '查询定额库'].map(t => <QueryTab key={t}>{t}</QueryTab>)}
      </TabRow>
      <LowerWell $grow={1}>
        <Grid>
          <colgroup><Col $w={37} /><Col $w={81} /><Col $w={155} /><Col $w={81} /></colgroup>
          <thead><tr><Head /><Head>编码</Head><Head $active>清单项</Head><Head>单位</Head></tr></thead>
          <tbody>
            {matches.map((name, i) => (
              <tr key={name}>
                <RowHead $active={i === 0}><Latin>{i + 1}</Latin></RowHead>
                <Cell $h={19}><Latin>{`01150300${i + 1}`}</Latin></Cell>
                <Cell $h={19} $fill={i === 0 ? '#e0f0ff' : undefined}><GridText text={name} /></Cell>
                <Cell $h={19}><Latin>m</Latin></Cell>
              </tr>
            ))}
          </tbody>
        </Grid>
      </LowerWell>
      <FilterBar>
        <FilterPart $gap={2} $pad={3}>
          <RadioLabel><Radio type="radio" name="filter" defaultChecked />按构件类型过滤</RadioLabel>
          <RadioLabel><Radio type="radio" name="filter" />按构件属性过滤</RadioLabel>
        </FilterPart>
        <FilterPart $gap={10} $pad={8}>
          <BarButton>添加</BarButton>
          <BarButton>关闭</BarButton>
        </FilterPart>
      </FilterBar>
    </LowerFrame>
    <SheetTabs>
      <SheetTab>
        <SheetShape viewBox="0 0 61 17" aria-hidden="true"><path d="M.5 0 6 16.500h49L60.500 0" fill="#fff" stroke="#444" /></SheetShape>
        <span>构件做法</span>
      </SheetTab>
    </SheetTabs>
  </Work>
);

export default function App() {
  return (
    <>
      <GlobalStyle />
      <Window>
        <TitleEdge />
        <MenuBar />
        <MainTools />
        <Body>
          <Navigator />
          <ComponentDock />
          <WorkArea />
        </Body>
        <Foot />
        <Badge>81</Badge>
      </Window>
    </>
  );
}
